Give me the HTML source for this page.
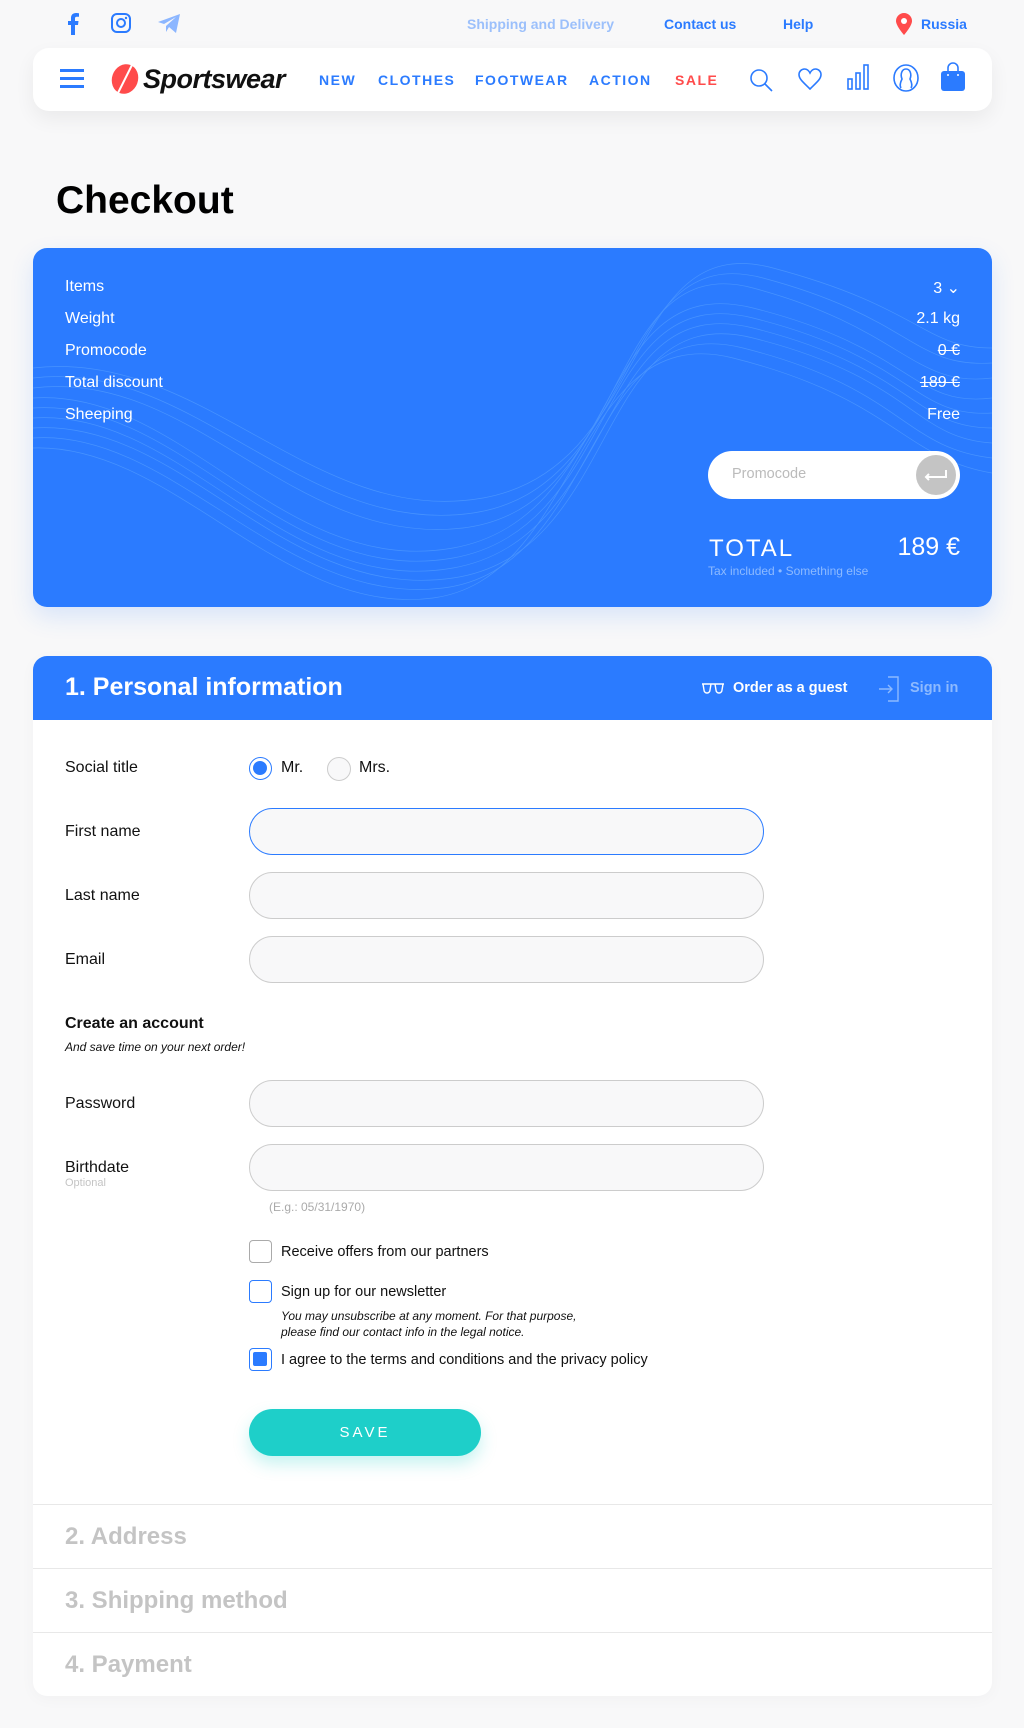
<!DOCTYPE html>
<html><head><meta charset="utf-8"><style>
*{box-sizing:border-box;margin:0;padding:0}
body{width:1024px;height:1728px;background:#f8f8f9;font-family:"Liberation Sans",sans-serif;position:relative;overflow:hidden;color:#111}
.a{position:absolute}
.top{font-size:14px;font-weight:bold;color:#2b7bff}
.nav{left:33px;top:48px;width:959px;height:63px;background:#fff;border-radius:16px;box-shadow:0 8px 20px rgba(0,0,0,.06)}
.nl{font-size:14px;font-weight:bold;color:#2b7bff;letter-spacing:1.5px;top:24px}
.card{left:33px;top:248px;width:959px;height:359px;background:#2b7bff;border-radius:14px;overflow:hidden;box-shadow:0 10px 24px rgba(43,123,255,.15)}
.row{color:#fff;font-size:16px;left:32px;right:32px;height:20px}
.row span{position:absolute;right:0;top:0}
.lbl{left:65px;font-size:16px;color:#111}
.inp{left:249px;width:515px;height:47px;border:1px solid #ccc;border-radius:24px;background:#f8f8f9}
.cb{left:249px;width:23px;height:23px;border:1px solid #aaa;border-radius:4px;background:#fff}
.ct{left:281px;font-size:14.5px;color:#111}
.sec{left:33px;width:959px;height:64px;background:#fff;border-top:1px solid #e8e8e8}
.sec div{position:absolute;left:32px;top:18px;font-size:24px;font-weight:bold;color:#c4c4c4}
</style></head><body>
<svg class="a" style="left:66px;top:13px" width="14" height="22" viewBox="0 0 14 22"><path d="M9 22V12h3l.5-4H9V5.5c0-1 .4-1.7 1.8-1.7H13V.3C12.5.2 11.3 0 10 0 7 0 5 1.8 5 5v3H2v4h3v10z" fill="#2b7bff"/></svg>
<svg class="a" style="left:111px;top:13px" width="20" height="20" viewBox="0 0 20 20"><rect x="1" y="1" width="18" height="18" rx="5" fill="none" stroke="#2b7bff" stroke-width="2"/><circle cx="10" cy="10" r="4" fill="none" stroke="#2b7bff" stroke-width="2"/><circle cx="15" cy="5" r="1.2" fill="#2b7bff"/></svg>
<svg class="a" style="left:158px;top:14px" width="22" height="19" viewBox="0 0 22 19"><path d="M0 8L22 0 18 19 11 13 8 18 8 12 18 3 6 10z" fill="#8cb6ff"/></svg>
<div class="a top" style="left:467px;top:16px;color:#9cc0fb">Shipping and Delivery</div>
<div class="a top" style="left:664px;top:16px">Contact us</div>
<div class="a top" style="left:783px;top:16px">Help</div>
<svg class="a" style="left:896px;top:13px" width="16" height="22" viewBox="0 0 16 22"><path d="M8 0a8 8 0 0 1 8 8c0 5-8 14-8 14S0 13 0 8a8 8 0 0 1 8-8z" fill="#ff4b4b"/><circle cx="8" cy="8" r="3" fill="#fff"/></svg>
<div class="a top" style="left:921px;top:16px">Russia</div>
<div class="a nav">
<div class="a" style="left:27px;top:21px;width:24px;height:3px;background:#2b7bff;box-shadow:0 8px 0 #2b7bff,0 16px 0 #2b7bff"></div>
<svg class="a" style="left:77px;top:15px" width="30" height="32" viewBox="0 0 30 32"><ellipse cx="15" cy="16" rx="13" ry="15" fill="#ff4b4b" transform="rotate(20 15 16)"/><path d="M22 2L8 30" stroke="#fff" stroke-width="2"/></svg>
<div class="a" style="left:110px;top:16px;font-size:27px;font-weight:bold;font-style:italic;color:#111;letter-spacing:-0.5px">Sportswear</div>
<div class="a nl" style="left:286px">NEW</div>
<div class="a nl" style="left:345px">CLOTHES</div>
<div class="a nl" style="left:442px">FOOTWEAR</div>
<div class="a nl" style="left:556px">ACTION</div>
<div class="a nl" style="left:642px;color:#ff4b4b">SALE</div>
<svg class="a" style="left:716px;top:20px" width="24" height="24" viewBox="0 0 24 24" fill="none" stroke="#2b7bff" stroke-width="1.6"><circle cx="10" cy="10" r="8"/><path d="M16 16l7 7"/></svg>
<svg class="a" style="left:765px;top:20px" width="24" height="22" viewBox="0 0 24 22" fill="none" stroke="#2b7bff" stroke-width="1.6"><path d="M12 21C5 14 1 11 1 6.5 1 3.5 3.5 1 6.5 1 9 1 11 3 12 5c1-2 3-4 5.5-4C20.5 1 23 3.5 23 6.5 23 11 19 14 12 21z"/></svg>
<svg class="a" style="left:814px;top:16px" width="22" height="26" viewBox="0 0 22 26" fill="none" stroke="#2b7bff" stroke-width="1.6"><rect x="1" y="15" width="4" height="10"/><rect x="9" y="9" width="4" height="16"/><rect x="17" y="1" width="4" height="24"/></svg>
<svg class="a" style="left:860px;top:16px" width="26" height="28" viewBox="0 0 26 28" fill="none" stroke="#2b7bff" stroke-width="1.6"><ellipse cx="13" cy="14" rx="12" ry="13"/><path d="M8 24c-2-3 0-7 1-9-2-5 0-10 4-10s6 5 4 10c1 2 3 6 1 9"/></svg>
<svg class="a" style="left:907px;top:14px" width="26" height="30" viewBox="0 0 26 30"><path d="M8 9V6a5 5 0 0 1 10 0v3" fill="none" stroke="#2b7bff" stroke-width="1.6"/><rect x="1" y="9" width="24" height="20" rx="3" fill="#2b7bff"/><circle cx="8" cy="13" r="1" fill="#fff"/><circle cx="18" cy="13" r="1" fill="#fff"/></svg>
</div>
<div class="a" style="left:56px;top:179px;font-size:39px;font-weight:bold;color:#000">Checkout</div>
<div class="a card">
<svg class="a" style="left:0;top:0" width="959" height="359" viewBox="0 0 959 359" fill="none" stroke="#5fa8ff" stroke-width="0.7" opacity=".55">
<path d="M0 150C150 140 250 330 420 300S560 20 720 60 880 160 959 150"/>
<path d="M0 160C150 150 250 340 420 310S560 30 720 70 880 170 959 165"/>
<path d="M0 170C150 160 250 350 420 320S560 40 720 80 880 180 959 180"/>
<path d="M0 180C150 170 250 355 420 330S560 50 720 90 880 190 959 195"/>
<path d="M0 140C160 120 260 300 430 280S570 0 720 40 880 140 959 130"/>
<path d="M0 130C160 110 270 290 440 265S580 -10 730 30 880 120 959 115"/>
<path d="M0 120C170 100 280 280 450 250S590 -20 740 20 890 100 959 100"/>
<path d="M0 190C140 180 250 360 410 340S550 60 710 100 870 200 959 210"/>
<path d="M0 200C140 195 250 370 400 350S540 70 700 110 870 210 959 225"/>
</svg>
<div class="a row" style="top:30px">Items<span>3 &#8964;</span></div>
<div class="a row" style="top:62px">Weight<span>2.1 kg</span></div>
<div class="a row" style="top:94px">Promocode<span style="text-decoration:line-through">0 €</span></div>
<div class="a row" style="top:126px">Total discount<span style="text-decoration:line-through">189 €</span></div>
<div class="a row" style="top:158px">Sheeping<span>Free</span></div>
<div class="a" style="left:675px;top:203px;width:252px;height:48px;background:#fff;border-radius:24px">
<div class="a" style="left:24px;top:15px;font-size:14.5px;color:#bbb">Promocode</div>
<div class="a" style="left:208px;top:4px;width:40px;height:40px;border-radius:50%;background:#c4c4c4"><svg width="40" height="40" viewBox="0 0 40 40" fill="none" stroke="#fff" stroke-width="2"><path d="M30 15v7H10M13 19l-3 3 3 3"/></svg></div>
</div>
<div class="a" style="left:676px;top:287px;font-size:24px;color:#fff;letter-spacing:2px">TOTAL</div>
<div class="a" style="left:700px;width:227px;top:285px;font-size:25px;color:#fff;text-align:right">189 €</div>
<div class="a" style="left:675px;top:316px;font-size:12px;color:#8dbaff">Tax included • Something else</div>
</div>
<div class="a" style="left:33px;top:656px;width:959px;height:1039px;background:#fff;border-radius:14px;box-shadow:0 4px 16px rgba(0,0,0,.03)"></div>
<div class="a" style="left:33px;top:656px;width:959px;height:64px;background:#2b7bff;border-radius:14px 14px 0 0"></div>
<div class="a" style="left:65px;top:673px;font-size:25px;font-weight:bold;color:#fff">1. Personal information</div>
<svg class="a" style="left:701px;top:682px" width="24" height="12" viewBox="0 0 24 12" fill="none" stroke="#fff" stroke-width="1.4"><path d="M1 2h22M2 2l1 6a3 3 0 0 0 6 0l1-6M14 2l1 6a3 3 0 0 0 6 0l1-6"/></svg>
<div class="a" style="left:733px;top:680px;font-size:14.5px;font-weight:bold;color:#fff">Order as a guest</div>
<svg class="a" style="left:878px;top:676px" width="22" height="26" viewBox="0 0 22 26" fill="none" stroke="#8dbaff" stroke-width="1.4"><path d="M10 1h10v24H10M1 13h13M10 9l4 4-4 4"/></svg>
<div class="a" style="left:910px;top:680px;font-size:14.5px;font-weight:bold;color:#8dbaff">Sign in</div>
<div class="a lbl" style="top:759px">Social title</div>
<div class="a" style="left:249px;top:757px;width:23px;height:23px;border-radius:50%;border:1.5px solid #2b7bff;background:#fff"><div style="margin:3px;width:14px;height:14px;border-radius:50%;background:#2b7bff"></div></div>
<div class="a" style="left:281px;top:759px;font-size:16px">Mr.</div>
<div class="a" style="left:327px;top:757px;width:24px;height:24px;border-radius:50%;border:1px solid #ccc;background:#f8f8f9"></div>
<div class="a" style="left:359px;top:759px;font-size:16px">Mrs.</div>
<div class="a lbl" style="top:823px">First name</div>
<div class="a inp" style="top:808px;border-color:#2b7bff"></div>
<div class="a lbl" style="top:887px">Last name</div>
<div class="a inp" style="top:872px"></div>
<div class="a lbl" style="top:951px">Email</div>
<div class="a inp" style="top:936px"></div>
<div class="a" style="left:65px;top:1015px;font-size:16px;font-weight:bold">Create an account</div>
<div class="a" style="left:65px;top:1040px;font-size:12px;font-style:italic">And save time on your next order!</div>
<div class="a lbl" style="top:1095px">Password</div>
<div class="a inp" style="top:1080px"></div>
<div class="a lbl" style="top:1159px">Birthdate</div>
<div class="a" style="left:65px;top:1177px;font-size:11px;color:#c4c4c4">Optional</div>
<div class="a inp" style="top:1144px"></div>
<div class="a" style="left:269px;top:1200px;font-size:12px;color:#aaa">(E.g.: 05/31/1970)</div>
<div class="a cb" style="top:1240px"></div>
<div class="a ct" style="top:1244px">Receive offers from our partners</div>
<div class="a cb" style="top:1280px;border-color:#2b7bff"></div>
<div class="a ct" style="top:1284px">Sign up for our newsletter</div>
<div class="a" style="left:281px;top:1308px;font-size:12px;font-style:italic;line-height:16px">You may unsubscribe at any moment. For that purpose,<br>please find our contact info in the legal notice.</div>
<div class="a cb" style="top:1348px;border:1.5px solid #2b7bff"><div style="margin:3px;width:14px;height:14px;border-radius:2px;background:#2b7bff"></div></div>
<div class="a ct" style="top:1352px">I agree to the terms and conditions and the privacy policy</div>
<div class="a" style="left:249px;top:1409px;width:232px;height:47px;border-radius:24px;background:#1ecfc9;box-shadow:0 8px 16px rgba(30,207,201,.25);color:#fff;font-size:15px;letter-spacing:3px;text-align:center;line-height:47px">SAVE</div>
<div class="a sec" style="top:1504px"><div>2. Address</div></div>
<div class="a sec" style="top:1568px"><div>3. Shipping method</div></div>
<div class="a sec" style="top:1632px;border-radius:0 0 14px 14px"><div>4. Payment</div></div>
</body></html>
